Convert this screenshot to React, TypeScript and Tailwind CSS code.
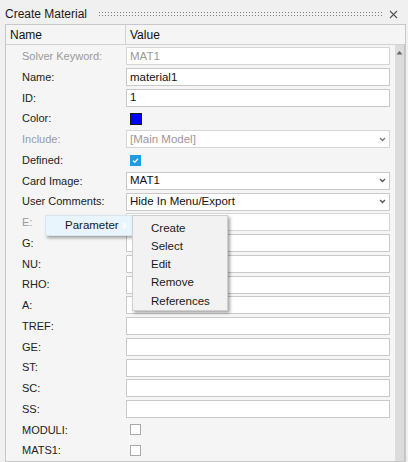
import React from "react";

type Row =
  | { label: string; kind: "text"; value?: string; disabled?: boolean }
  | { label: string; kind: "select"; value: string; disabled?: boolean }
  | { label: string; kind: "color" }
  | { label: string; kind: "check"; checked: boolean };

const rows: Row[] = [
  { label: "Solver Keyword:", kind: "text", value: "MAT1", disabled: true },
  { label: "Name:", kind: "text", value: "material1" },
  { label: "ID:", kind: "text", value: "1" },
  { label: "Color:", kind: "color" },
  { label: "Include:", kind: "select", value: "[Main Model]", disabled: true },
  { label: "Defined:", kind: "check", checked: true },
  { label: "Card Image:", kind: "select", value: "MAT1" },
  { label: "User Comments:", kind: "select", value: "Hide In Menu/Export" },
  { label: "E:", kind: "text", disabled: true },
  { label: "G:", kind: "text" },
  { label: "NU:", kind: "text" },
  { label: "RHO:", kind: "text" },
  { label: "A:", kind: "text" },
  { label: "TREF:", kind: "text" },
  { label: "GE:", kind: "text" },
  { label: "ST:", kind: "text" },
  { label: "SC:", kind: "text" },
  { label: "SS:", kind: "text" },
  { label: "MODULI:", kind: "check", checked: false },
  { label: "MATS1:", kind: "check", checked: false },
];

function Chevron({ color = "#555" }: { color?: string }) {
  return (
    <svg width="7" height="5" viewBox="0 0 7 5" className="shrink-0">
      <path d="M1 1 L3.5 3.5 L6 1" fill="none" stroke={color} strokeWidth="1.3" />
    </svg>
  );
}

function Value({ row }: { row: Row }) {
  if (row.kind === "text") {
    return (
      <div
        className={`h-[18px] w-[264px] border bg-white flex items-center px-[3px] text-[11.5px] ${
          row.disabled ? "border-[#d6d6d6] text-[#9a9a9a]" : "border-[#c9c9c9] text-[#111]"
        }`}
      >
        {row.value}
      </div>
    );
  }
  if (row.kind === "select") {
    return (
      <div
        className={`h-[18px] w-[264px] border bg-white flex items-center justify-between pl-[3px] pr-[3px] text-[11.5px] ${
          row.disabled ? "border-[#d6d6d6] text-[#9a9a9a]" : "border-[#c9c9c9] text-[#111]"
        }`}
      >
        <span>{row.value}</span>
        <Chevron color={row.disabled ? "#777" : "#555"} />
      </div>
    );
  }
  if (row.kind === "color") {
    return <div className="ml-[4px] w-[12px] h-[12px] bg-[#0000ff] border border-[#1a1a1a]" />;
  }
  return row.checked ? (
    <div className="ml-[4px] w-[11px] h-[11px] bg-[#1e9be2] flex items-center justify-center">
      <svg width="9" height="9" viewBox="0 0 9 9">
        <path d="M2 4.6 L3.8 6.3 L7 2.8" fill="none" stroke="white" strokeWidth="1.3" />
      </svg>
    </div>
  ) : (
    <div className="ml-[4px] w-[11px] h-[11px] bg-white border border-[#a9a9a9]" />
  );
}

function Grip() {
  const dots: React.ReactNode[] = [];
  for (let i = 0; i < 95; i++) {
    dots.push(<rect key={"a" + i} x={i * 3} y={1} width="1" height="1" fill="#7d7d7d" />);
    dots.push(<rect key={"b" + i} x={i * 3} y={4} width="1" height="1" fill="#7d7d7d" />);
  }
  return (
    <svg className="ml-[12px] shrink-0" width="283" height="6" viewBox="0 0 283 6">
      {dots}
    </svg>
  );
}

export default function App() {
  return (
    <div
      className="relative w-[408px] h-[462px] overflow-hidden bg-[#f0f0f0] text-[#222]"
      style={{ fontFamily: '"Liberation Sans", Arial, sans-serif' }}
    >
      {/* Title bar */}
      <div className="h-[24px] flex items-center pt-[4px] pl-[5px]">
        <span className="shrink-0 whitespace-nowrap text-[12px] text-[#1a1a1a] leading-none">
          Create Material
        </span>
        <Grip />
        <svg className="ml-[7px] shrink-0" width="9" height="9" viewBox="0 0 9 9">
          <path d="M1 1 L8 8 M8 1 L1 8" stroke="#555" strokeWidth="1.1" />
        </svg>
      </div>

      {/* Panel */}
      <div className="ml-[5px] mr-[2px] h-[438px] border border-[#c8c8c8] bg-[#f5f5f5] flex flex-col">
        <div className="h-[20px] flex border-b border-[#d2d2d2] text-[12px] text-[#111]">
          <div className="w-[120px] pl-[4px] flex items-center border-r border-[#d2d2d2]">Name</div>
          <div className="pl-[4px] flex items-center">Value</div>
        </div>
        <div className="flex flex-1 min-h-0">
          <div className="flex-1 pt-[1px]">
            {rows.map((r) => (
              <div key={r.label} className="h-[20.75px] flex items-center">
                <div
                  className={`w-[120px] pl-[16px] text-[11px] ${
                    r.label === "Solver Keyword:" || r.label === "Include:" || r.label === "E:"
                      ? "text-[#9a9a9a]"
                      : "text-[#222]"
                  }`}
                >
                  {r.label}
                </div>
                <Value row={r} />
              </div>
            ))}
          </div>
          <div className="w-[10px] bg-[#dcdcdc] border-r border-[#c4c4c4] flex flex-col items-center pt-[5px]">
            <svg width="7" height="5" viewBox="0 0 7 5">
              <path d="M0.5 4.5 L3.5 1 L6.5 4.5 Z" fill="#666" />
            </svg>
          </div>
        </div>
      </div>

      {/* Context menu: Parameter */}
      <div className="absolute left-[45px] top-[215px] w-[88px] h-[21px] bg-[#e8f5fc] border border-[#d8e6ef] shadow-[2px_2px_3px_rgba(0,0,0,0.35)] flex items-center text-[11.5px] text-[#1a1a1a]">
        <span className="ml-[19px]">Parameter</span>
        <svg className="ml-auto mr-[5px]" width="4" height="7" viewBox="0 0 4 7">
          <path d="M0 0 L4 3.5 L0 7 Z" fill="#ffffff" />
        </svg>
      </div>

      {/* Submenu */}
      <div className="absolute left-[132px] top-[215px] w-[96px] h-[96px] bg-[#f2f2f2] border border-[#cfcfcf] shadow-[2px_2px_3px_rgba(0,0,0,0.35)] pt-[3px] text-[11.5px] text-[#1a1a1a]">
        {["Create", "Select", "Edit", "Remove", "References"].map((t) => (
          <div key={t} className="h-[18.25px] flex items-center pl-[18px]">
            {t}
          </div>
        ))}
      </div>
    </div>
  );
}
